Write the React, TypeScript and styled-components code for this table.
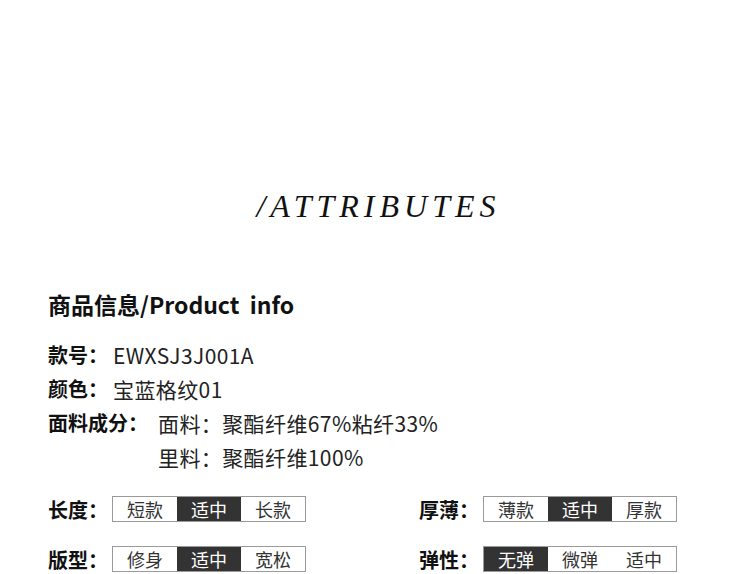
import styled, { createGlobalStyle } from 'styled-components';

const GlobalStyle = createGlobalStyle`
  body {
    margin: 0;
    background: #fff;
    font-family: "Noto Sans CJK SC", "Noto Sans", sans-serif;
    color: #222;
  }
`;

const Page = styled.div`
  width: 750px;
  padding-top: 186px;
`;

const Title = styled.h1`
  margin: 0;
  padding-left: 7px;
  text-align: center;
  font-family: "Liberation Serif", "DejaVu Serif", serif;
  font-style: italic;
  font-weight: 400;
  font-size: 32px;
  line-height: 40px;
  letter-spacing: 5px;
  color: #111;
`;

const Section = styled.div`
  padding: 63px 48px 0;
`;

const Heading = styled.h2`
  margin: 0;
  font-size: 23px;
  line-height: 30px;
  font-weight: 700;
  color: #111;
`;

const InfoList = styled.div`
  margin-top: 19px;
  display: flex;
  flex-direction: column;
`;

const InfoRow = styled.div`
  display: flex;
  align-items: flex-start;
`;

const Label = styled.span<{ $gap?: number }>`
  font-size: 20px;
  line-height: 34px;
  font-weight: 700;
  color: #111;
  margin-right: ${(p) => p.$gap ?? 5}px;
  white-space: nowrap;
`;

const Values = styled.div`
  display: flex;
  flex-direction: column;
`;

const Value = styled.span`
  display: block;
  height: 34px;
  font-size: 21px;
  line-height: 34px;
  letter-spacing: 0.4px;
  color: #222;
  white-space: nowrap;
`;

const SelectGrid = styled.div`
  margin-top: 22px;
  display: grid;
  grid-template-columns: 371px 1fr;
  row-gap: 24px;
`;

const SelectRow = styled.div`
  display: flex;
  align-items: center;
  height: 26px;
`;

const SelectLabel = styled.span`
  width: 64px;
  flex-shrink: 0;
  font-size: 20px;
  font-weight: 700;
  color: #111;
  white-space: nowrap;
`;

const Options = styled.div`
  display: grid;
  grid-template-columns: repeat(3, 64px);
  border: 1px solid #9a9a9a;
  height: 24px;
`;

const Option = styled.span<{ $active?: boolean }>`
  display: flex;
  align-items: center;
  justify-content: center;
  font-size: 18px;
  line-height: 24px;
  background: ${(p) => (p.$active ? '#333' : '#fff')};
  color: ${(p) => (p.$active ? '#fff' : '#333')};
`;

const selectors = [
  { label: '长度：', options: ['短款', '适中', '长款'], active: 1 },
  { label: '厚薄：', options: ['薄款', '适中', '厚款'], active: 1 },
  { label: '版型：', options: ['修身', '适中', '宽松'], active: 1 },
  { label: '弹性：', options: ['无弹', '微弹', '适中'], active: 0 },
];

export default function App() {
  return (
    <>
      <GlobalStyle />
      <Page>
        <Title>/ATTRIBUTES</Title>
        <Section>
          <Heading>商品信息/Product&nbsp; info</Heading>
          <InfoList>
            <InfoRow>
              <Label>款号：</Label>
              <Value>EWXSJ3J001A</Value>
            </InfoRow>
            <InfoRow>
              <Label>颜色：</Label>
              <Value>宝蓝格纹01</Value>
            </InfoRow>
            <InfoRow>
              <Label $gap={10}>面料成分：</Label>
              <Values>
                <Value>面料：聚酯纤维67%粘纤33%</Value>
                <Value>里料：聚酯纤维100%</Value>
              </Values>
            </InfoRow>
          </InfoList>
          <SelectGrid>
            {selectors.map((s) => (
              <SelectRow key={s.label}>
                <SelectLabel>{s.label}</SelectLabel>
                <Options>
                  {s.options.map((o, i) => (
                    <Option key={o} $active={i === s.active}>
                      {o}
                    </Option>
                  ))}
                </Options>
              </SelectRow>
            ))}
          </SelectGrid>
        </Section>
      </Page>
    </>
  );
}
